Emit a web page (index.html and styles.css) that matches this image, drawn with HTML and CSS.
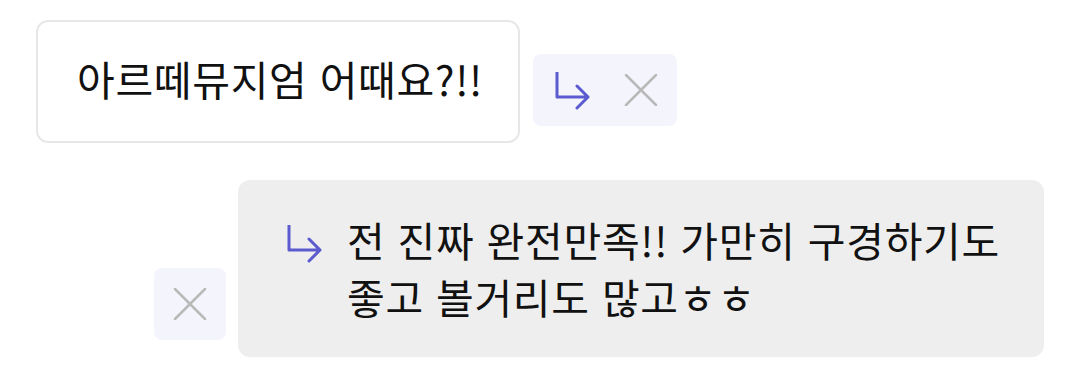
FILE: index.html
```html
<!DOCTYPE html>
<html lang="ko">
<head>
<meta charset="utf-8">
<link rel="stylesheet" href="styles.css">
</head>
<body>
<div class="chat">
  <div class="row row-left">
    <div class="bubble bubble-out">아르떼뮤지엄 어때요?!!</div>
    <div class="actions">
      <span class="slot">
        <svg class="ico-reply" width="36" height="38" viewBox="0 0 36 38"><path d="M2 0 V25 H33 M22 14 L33 25 L22 36" fill="none" stroke="#5b5bcf" stroke-width="3" stroke-linecap="round" stroke-linejoin="round"/></svg>
      </span>
      <span class="slot">
        <svg class="ico-x" width="34" height="32" viewBox="0 0 34 32"><path d="M2 1 L32 31 M32 1 L2 31" fill="none" stroke="#b9b9b9" stroke-width="2.5" stroke-linecap="round"/></svg>
      </span>
    </div>
  </div>
  <div class="row row-right">
    <div class="actions">
      <span class="slot">
        <svg class="ico-x" width="34" height="32" viewBox="0 0 34 32"><path d="M2 1 L32 31 M32 1 L2 31" fill="none" stroke="#b9b9b9" stroke-width="2.5" stroke-linecap="round"/></svg>
      </span>
    </div>
    <div class="bubble bubble-in">
      <svg class="ico-reply quote" width="36" height="38" viewBox="0 0 36 38"><path d="M2 0 V25 H33 M22 14 L33 25 L22 36" fill="none" stroke="#5b5bcf" stroke-width="3" stroke-linecap="round" stroke-linejoin="round"/></svg>
      <p class="msg">전 진짜 완전만족!! 가만히 구경하기도 좋고 볼거리도 많고ㅎㅎ</p>
    </div>
  </div>
</div>
</body>
</html>
```

FILE: styles.css
```css
* { box-sizing: border-box; }
html, body {
  margin: 0;
  padding: 0;
  background: #ffffff;
}
body {
  font-family: "Noto Sans CJK KR", "Noto Sans", sans-serif;
  color: #111111;
  width: 1080px;
  height: 385px;
  overflow: hidden;
}
.chat {
  display: flex;
  flex-direction: column;
  gap: 37px;
  padding: 20px 36px 0 36px;
}
.row {
  display: flex;
  align-items: flex-end;
  gap: 13px;
}
.row-right {
  justify-content: flex-end;
  gap: 12px;
}
.bubble {
  border-radius: 12px;
  font-size: 41px;
  line-height: 57px;
  letter-spacing: 0.7px;
  word-break: keep-all;
}
.bubble-out {
  width: 484px;
  height: 123px;
  border: 2px solid #e7e7e7;
  background: #ffffff;
  padding: 28px 0 0 39px;
  white-space: nowrap;
}
.bubble-in {
  width: 806px;
  height: 177px;
  background: #eeeeee;
  display: flex;
  align-items: flex-start;
  padding: 31px 20px 0 49px;
}
.quote {
  flex: none;
  margin-top: 14px;
  margin-right: 24px;
}
.msg {
  margin: 0;
}
.actions {
  display: flex;
  background: #f4f4fc;
  border-radius: 8px;
  margin-bottom: 17px;
}
.slot {
  width: 72px;
  height: 72px;
  display: flex;
  align-items: center;
  justify-content: center;
}
.slot .ico-reply { margin-left: 8px; margin-top: 2px; }
```
